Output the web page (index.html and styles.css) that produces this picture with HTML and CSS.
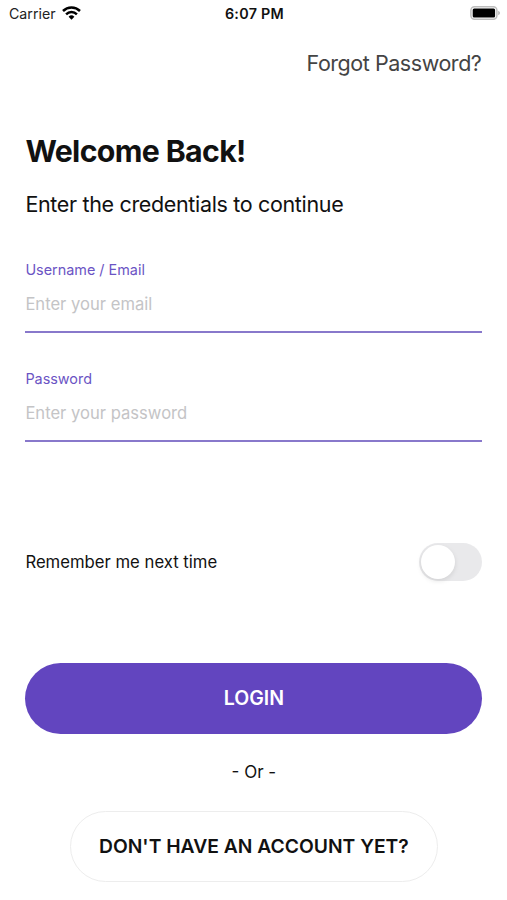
FILE: index.html
```html
<!DOCTYPE html>
<html lang="en">
<head>
<meta charset="utf-8">
<title>Login</title>
<link rel="stylesheet" href="styles.css">
</head>
<body>
<header class="status">
  <div class="carrier"><span class="carrier-name">Carrier</span>
    <svg class="wifi" width="19" height="14" viewBox="0 0 19 14"><g fill="none" stroke="#000" stroke-width="2.5"><path d="M1 5a12.2 12.2 0 0 1 17 0"/><path d="M4.1 8.3a7.7 7.7 0 0 1 10.8 0"/></g><path d="M9.5 13.8L6.6 10.8a4.1 4.1 0 0 1 5.8 0z"/></svg>
  </div>
  <span class="time">6:07 PM</span>
  <svg class="battery" width="30" height="14" viewBox="0 0 30 14"><rect x=".9" y=".8" width="26" height="12.4" rx="3.6" fill="none" stroke="#bdbdbd" stroke-width="1.5"/><rect x="2.7" y="2.5" width="22.4" height="9" rx="1.5"/><path d="M28.3 4.8c2 .8 2 3.6 0 4.4z" fill="#aaa"/></svg>
</header>
<main class="page">
  <a class="forgot">Forgot Password?</a>
  <h1>Welcome Back!</h1>
  <p class="intro">Enter the credentials to continue</p>
  <form>
    <label class="field"><span class="label">Username / Email</span><input type="text" placeholder="Enter your email"></label>
    <label class="field"><span class="label">Password</span><input type="password" placeholder="Enter your password"></label>
    <div class="remember"><span class="remember-text">Remember me next time</span><span class="switch"><span class="knob"></span></span></div>
    <button type="button" class="login">LOGIN</button>
    <p class="or">- Or -</p>
    <button type="button" class="signup">DON'T HAVE AN ACCOUNT YET?</button>
  </form>
</main>
</body>
</html>
```
FILE: styles.css
```css
* { box-sizing: border-box; }
body { margin: 0; height: 900px; overflow: hidden; background: #fff; color: #111; font-family: Inter, "Liberation Sans", sans-serif; }
h1, p { margin: 0; }
.status { display: grid; grid-template-columns: 1fr auto 1fr; align-items: center; height: 26px; padding: 0 7px 0 9px; }
.carrier { display: flex; align-items: center; gap: 6px; font-size: 14.2px; color: #222; }
.time { font-size: 14.3px; font-weight: 600; letter-spacing: .3px; }
.battery { justify-self: end; }
.page { padding: 0 24.6px 0 25.4px; }
.forgot { display: block; height: 74px; padding-right: 1px; line-height: 75px; text-align: right; font-size: 21.5px; color: #444; letter-spacing: -.45px; }
h1 { height: 64px; margin-top: 19px; line-height: 64px; font-size: 30.3px; font-weight: 700; letter-spacing: -.65px; }
.intro { height: 42px; line-height: 43px; font-size: 21.5px; letter-spacing: -.34px; }
.field { display: block; height: 73px; margin-top: 36px; border-bottom: 2px solid #8878cb; }
.field:first-child { margin-top: 35px; }
.label { display: block; height: 20px; line-height: 20px; font-size: 14.4px; color: #6b54c4; }
input { display: block; width: 100%; height: 48px; padding: 0; border: 0; outline: 0; font: 16.6px Inter, sans-serif; background: none; }
input::placeholder { color: #c4c4c6; opacity: 1; }
.remember { display: flex; align-items: center; justify-content: space-between; height: 38px; margin-top: 101px; font-size: 16.7px; }
.switch { width: 63px; height: 38px; padding: 2px; border-radius: 19px; background: #e9e9eb; }
.knob { display: block; width: 34px; height: 34px; border-radius: 50%; background: #fff; box-shadow: 0 2px 5px rgba(0,0,0,.1); }
button { display: block; font-family: inherit; padding: 0 0 2px; }
.login { width: 100%; height: 71px; margin-top: 82px; border: 0; border-radius: 36px; background: #6245bf; color: #fff; font-size: 19.5px; font-weight: 600; }
.or { height: 77px; line-height: 77px; text-align: center; font-size: 17px; }
.signup { width: 368px; height: 71px; margin: 0 auto; border: 1px solid #ededed; border-radius: 36px; background: #fff; color: #111; font-size: 19.3px; font-weight: 600; white-space: nowrap; }
```
